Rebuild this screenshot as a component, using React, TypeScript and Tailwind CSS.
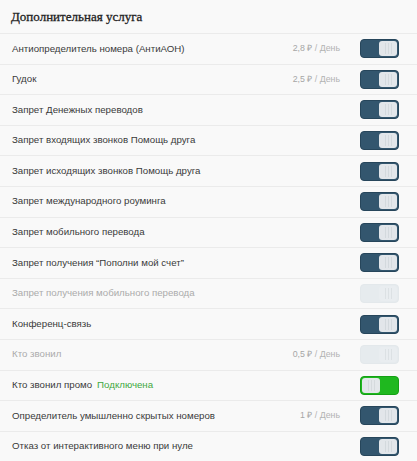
import React from "react";

type Row = { label: string; price?: string; state: "on" | "off" | "disabled" | "green"; note?: string };

const rows: Row[] = [
  { label: "Антиопределитель номера (АнтиАОН)", price: "2,8 ₽", state: "on" },
  { label: "Гудок", price: "2,5 ₽", state: "on" },
  { label: "Запрет Денежных переводов", state: "on" },
  { label: "Запрет входящих звонков Помощь друга", state: "on" },
  { label: "Запрет исходящих звонков Помощь друга", state: "on" },
  { label: "Запрет международного роуминга", state: "on" },
  { label: "Запрет мобильного перевода", state: "on" },
  { label: "Запрет получения “Пополни мой счет”", state: "on" },
  { label: "Запрет получения мобильного перевода", state: "disabled" },
  { label: "Конференц-связь", state: "on" },
  { label: "Кто звонил", price: "0,5 ₽", state: "disabled" },
  { label: "Кто звонил промо", state: "green", note: "Подключена" },
  { label: "Определитель умышленно скрытых номеров", price: "1 ₽", state: "on" },
  { label: "Отказ от интерактивного меню при нуле", state: "on" },
];

function Grip({ color }: { color: string }) {
  return (
    <div className="flex h-full items-center justify-center gap-[2px]">
      <span className={`h-[11px] w-px ${color}`} />
      <span className={`h-[11px] w-px ${color}`} />
      <span className={`h-[11px] w-px ${color}`} />
    </div>
  );
}

function Toggle({ state }: { state: Row["state"] }) {
  if (state === "green") {
    return (
      <div className="flex h-[19px] w-[39px] rounded-[4px] border border-[#15a015] bg-[#1fb81f] p-[1px]">
        <div className="h-full w-[18px] rounded-[3px] bg-[#e3e7ea]">
          <Grip color="bg-[#d5dadd]" />
        </div>
      </div>
    );
  }
  if (state === "disabled") {
    return (
      <div className="flex h-[19px] w-[39px] justify-end rounded-[4px] border border-[#e3e8eb] bg-[#e6ebee] p-[1px]">
        <div className="h-full w-[18px] rounded-[3px] bg-[#e9edf0]">
          <Grip color="bg-[#dce1e4]" />
        </div>
      </div>
    );
  }
  return (
    <div className="flex h-[19px] w-[39px] justify-end rounded-[4px] border border-[#27465b] bg-[#33566e] p-[1px]">
      <div className="h-full w-[18px] rounded-[3px] bg-[#e2e6ea]">
        <Grip color="bg-[#d3d9dd]" />
      </div>
    </div>
  );
}

export default function App() {
  return (
    <div
      className="h-[461px] w-[417px] overflow-hidden bg-[#f9f9f9]"
      style={{ fontFamily: "'Liberation Sans', Arial, sans-serif" }}
    >
      <div className="flex h-[33px] items-center pl-[11px]">
        <span
          className="text-[13px] text-[#222222]"
          style={{ fontFamily: "'Liberation Serif', 'Times New Roman', serif", WebkitTextStroke: "0.3px #222222" }}
        >
          Дополнительная услуга
        </span>
      </div>
      {rows.map((r, i) => (
        <div
          key={i}
          className="flex h-[30.6px] items-center border-t border-[#ebebeb] pl-[12px] pr-[18px]"
        >
          <span
            className={`text-[9.7px] ${r.state === "disabled" ? "text-[#ababab]" : "text-[#3a3a3a]"}`}
          >
            {r.label}
          </span>
          {r.note && <span className="ml-[5px] text-[9.7px] text-[#3ea83e]">{r.note}</span>}
          <div className="flex-1" />
          {r.price && (
            <span className="mr-[20px] text-[8.8px] text-[#a6a6a6]">
              {r.price}
              <span className="text-[#b3b3b3]"> / День</span>
            </span>
          )}
          <Toggle state={r.state} />
        </div>
      ))}
    </div>
  );
}
